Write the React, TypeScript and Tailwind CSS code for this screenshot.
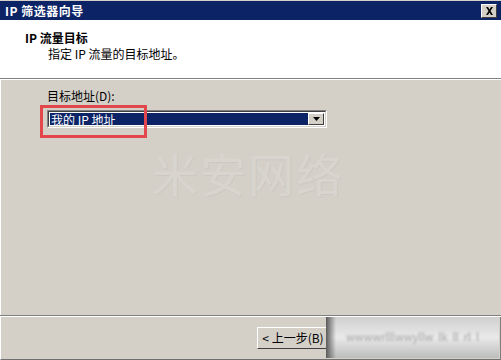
import React from "react";

export default function App() {
  return (
    <div className="relative w-[501px] h-[360px] overflow-hidden bg-[#d4d0c8] font-['Noto_Sans_CJK_SC','Noto_Sans',sans-serif] text-[12px] leading-[14px] text-black flex flex-col">
      {/* title bar */}
      <div className="h-[20px] bg-[#0c2366] flex items-center justify-between pl-[5px] pr-[4px] border-t border-t-[#d4d0c8]">
        <span className="text-white font-bold text-[12px] leading-[14px] tracking-[0.5px]">IP 筛选器向导</span>
        <div className="w-[16px] h-[14px] bg-[#d4d0c8] border-t border-l border-t-white border-l-white border-b border-r border-b-[#404040] border-r-[#404040] flex items-center justify-center">
          <svg width="9" height="8" viewBox="0 0 9 8">
            <path d="M1 0h2l1.5 2.5L6 0h2L5.5 4 8 8H6L4.5 5.5 3 8H1l2.5-4z" fill="#000" />
          </svg>
        </div>
      </div>
      {/* header */}
      <div className="h-[58px] bg-white border-l border-l-white flex flex-col pt-[11px]">
        <div className="pl-[24px] font-bold">IP 流量目标</div>
        <div className="pl-[47px] mt-[2px]">指定 IP 流量的目标地址。</div>
      </div>
      <div className="h-[1px] bg-[#808080]" />
      <div className="h-[1px] bg-white" />
      {/* body */}
      <div className="h-[235px] border-l border-l-white pl-[46px] pt-[9px] flex flex-col">
        <div>目标地址(D):</div>
        <div className="mt-[7px] w-[280px] h-[18px] border-t border-l border-t-[#808080] border-l-[#808080] border-b border-r border-b-white border-r-white">
          <div className="h-full border-t border-l border-t-[#404040] border-l-[#404040] border-b border-r border-b-[#d4d0c8] border-r-[#d4d0c8] bg-white flex items-center p-[1px]">
            <div className="flex-1 h-full bg-[#0c2366] text-white flex items-center pl-[1px] leading-[13px]">我的 IP 地址</div>
            <div className="w-[16px] h-full bg-[#d4d0c8] border-t border-l border-t-white border-l-white border-b border-r border-b-[#404040] border-r-[#404040] flex items-center justify-center">
              <svg width="7" height="4" viewBox="0 0 7 4">
                <path d="M0 0h7L3.5 4z" fill="#000" />
              </svg>
            </div>
          </div>
        </div>
      </div>
      <div className="h-[1px] bg-[#808080]" />
      <div className="h-[1px] bg-white" />
      {/* footer */}
      <div className="h-[43px] border-l border-l-white border-b border-b-[#707070] border-r border-r-[#808080] flex items-start justify-end pt-[10px] pr-[171px]">
        <div className="w-[72px] h-[22px] bg-[#d4d0c8] border-t border-l border-t-white border-l-white border-b border-r border-b-[#404040] border-r-[#404040] flex items-center justify-center text-[12px]">
          &lt; 上一步(B)
        </div>
      </div>

      {/* watermark */}
      <div className="absolute left-[152px] top-[146px] text-[46px] leading-[52px] tracking-[2px] text-[#d8d5ce] [text-shadow:1px_1px_0_#cdc9c2]">
        米安网络
      </div>

      {/* red highlight */}
      <div className="absolute left-[40px] top-[105px] w-[107px] h-[33px] border-[3px] border-[#e2474b]" />

      {/* blurred patch */}
      <div className="absolute left-[326px] top-[317px] w-[173px] h-[41px] bg-gradient-to-b from-[#d0d0d0] via-[#e9e9e9] to-[#bdbdbd] overflow-hidden">
        <div className="absolute left-0 top-0 w-[10px] h-full bg-gradient-to-r from-[#5a5a5a] to-transparent" />
        <div className="absolute left-[20px] top-[12px] text-[11px] text-[#a5a5a5] blur-[1px] whitespace-nowrap">
          wwwwrlllwwyllw&nbsp;&nbsp;lk&nbsp;&nbsp;ll&nbsp;&nbsp;rl&nbsp;&nbsp;l
        </div>
      </div>
    </div>
  );
}
